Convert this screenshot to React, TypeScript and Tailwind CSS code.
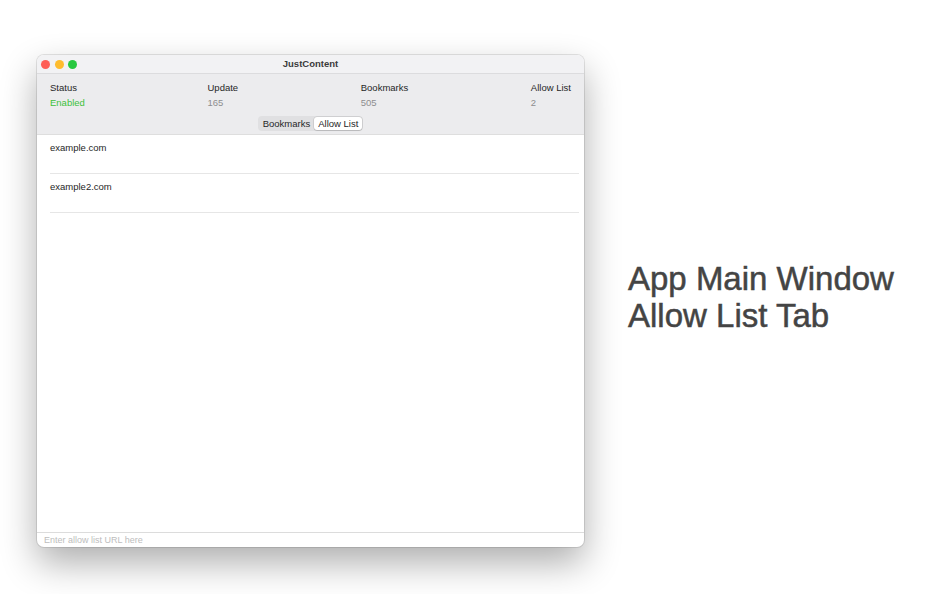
import React from "react";

const font = { fontFamily: '"Liberation Sans", Arial, sans-serif' };

interface IStat {
  label: string;
  value: string;
  green?: boolean;
}

const Stat: React.FC<IStat> = ({ label, value, green }) => {
  return (
    <div className="flex flex-col">
      <span className="text-[9.5px] leading-[12px] text-[#262626]">{label}</span>
      <span className={`text-[9.5px] leading-[12px] mt-[3px] ${green ? "text-[#3cc13b]" : "text-[#8e8e8e]"}`}>
        {value}
      </span>
    </div>
  );
};

const Row: React.FC<{ text: string }> = ({ text }) => {
  return (
    <div className="ml-[13px] mr-[5px] h-[39px] border-b border-[#e6e6e6] pt-[7px]">
      <p className="text-[9.5px] leading-[11px] text-[#262626]">{text}</p>
    </div>
  );
};

export default function App() {
  return (
    <div className="w-[950px] h-[594px] bg-white flex items-start pl-[37px] pt-[55px]" style={font}>
      <div className="w-[547px] h-[492px] rounded-[7px] flex flex-col overflow-hidden bg-white shadow-[0_16px_36px_rgba(0,0,0,0.32),0_0_0_1px_rgba(0,0,0,0.1)]">
        {/* title bar */}
        <div className="relative h-[19px] bg-[#f2f2f4] border-b border-[#dcdcde] flex items-center justify-center">
          <div className="absolute left-[4px] top-[5px] flex gap-[4.5px]">
            <span className="w-[9px] h-[9px] rounded-full bg-[#fe5f57]" />
            <span className="w-[9px] h-[9px] rounded-full bg-[#febc2e]" />
            <span className="w-[9px] h-[9px] rounded-full bg-[#28c840]" />
          </div>
          <span className="text-[9.5px] font-bold text-[#3b3b3b] leading-none">JustContent</span>
        </div>

        {/* header */}
        <div className="h-[61px] bg-[#ececee] border-b border-[#dedede] flex flex-col">
          <div className="flex justify-between px-[13px] pt-[8px]">
            <Stat label="Status" value="Enabled" green />
            <Stat label="Update" value="165" />
            <Stat label="Bookmarks" value="505" />
            <Stat label="Allow List" value="2" />
          </div>
          <div className="flex justify-center mt-[7px]">
            <div className="flex items-center h-[15px] rounded-[4px] bg-[#e0e0e2] p-[1px]">
              <span className="px-[4px] text-[9.5px] leading-[12px] text-[#262626]">Bookmarks</span>
              <span className="px-[4px] h-[13px] rounded-[3px] bg-white shadow-[0_0_0_0.5px_rgba(0,0,0,0.15),0_1px_1px_rgba(0,0,0,0.1)] text-[9.5px] leading-[13px] text-[#262626]">
                Allow List
              </span>
            </div>
          </div>
        </div>

        {/* list */}
        <div className="flex-1 flex flex-col">
          <Row text="example.com" />
          <Row text="example2.com" />
        </div>

        {/* input */}
        <div className="h-[15px] border-t border-[#dcdcdc] px-[7px] flex items-center">
          <span className="text-[9px] leading-none text-[#bdbdbd]">Enter allow list URL here</span>
        </div>
      </div>

      <div className="ml-[44px] self-center -mt-[56px] flex flex-col text-[#444444] text-[33px] leading-[37px] [-webkit-text-stroke:0.5px_#444444]">
        <span>App Main Window</span>
        <span>Allow List Tab</span>
      </div>
    </div>
  );
}
